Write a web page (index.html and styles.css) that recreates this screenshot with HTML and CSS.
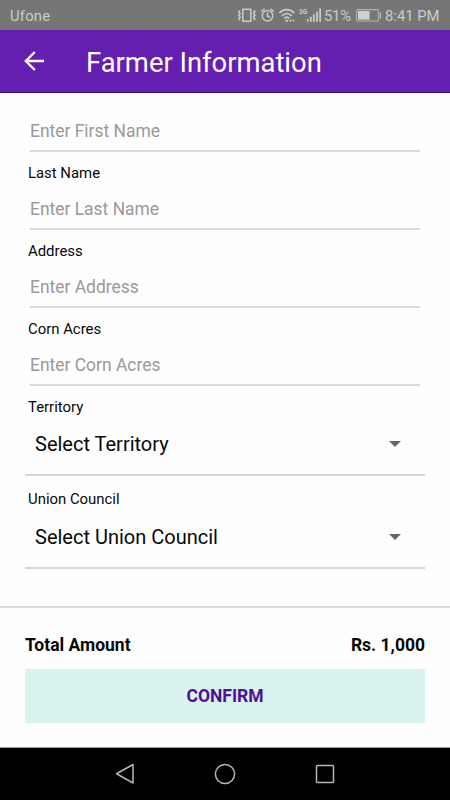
FILE: index.html
```html
<!DOCTYPE html>
<html lang="en">
<head>
<meta charset="utf-8">
<title>Farmer Information</title>
<link rel="stylesheet" href="styles.css">
</head>
<body>
<div class="status">
  <span class="carrier">Ufone</span>
  <svg class="indicators" width="86" height="30" viewBox="0 0 86 30" fill="none" stroke="#cbcbcb" stroke-width="1.5">
    <rect x="5.800" y="9.300" width="8" height="12"/>
    <path d="M2.800 10.500L1.700 12.200l1.500 1.600L1.700 15.400l1.500 1.600L1.700 18.600l1.100 1.700M16.800 10.500l1.100 1.700-1.500 1.600 1.500 1.600-1.500 1.600 1.500 1.600-1.100 1.700" stroke-width="1.500"/>
    <circle cx="30.500" cy="15.800" r="5.300"/>
    <path d="M30.500 12.500v3.500l2.500 1.600M24.300 11.500l3.300-2.800M36.700 11.500l-3.300-2.800"/>
    <path d="M42.300 13c4.300-4.500 10.600-4.500 15 0M44.800 15.900c3-3 7-3 10 0M47.300 18.400c1.500-1.500 3.500-1.500 5 0" stroke-width="1.700"/>
    <circle cx="49.700" cy="20.700" r="1.300" fill="#cbcbcb" stroke="none"/>
    <path d="M52.500 20.500h1.800M55.800 20.500h1.500" stroke-width="1.900"/>
    <path d="M70.700 21.700v-2.500M73.800 21.700v-5M76.900 21.700v-7.500M80 21.700V11.500M83.100 21.700V8.500" stroke-width="1.800"/>
    <text class="network" x="62" y="13.700">3G</text>
  </svg>
  <span class="percent">51%</span>
  <svg class="battery" width="28" height="30" viewBox="0 0 28 30">
    <rect x="1.600" y="9.600" width="21.800" height="11.400" rx="1" fill="none" stroke="#b4b4b4" stroke-width="1.100"/>
    <rect x="3" y="11" width="11.500" height="8.600" fill="#d0d0d0"/>
    <path d="M25.400 12.500v6" stroke="#c4c4c4" stroke-width="1.300"/>
  </svg>
  <span class="clock">8:41 PM</span>
</div>
<header class="header">
  <svg width="20" height="20" viewBox="0 0 20 20" fill="none" stroke="#fff" stroke-width="2.400"><path d="M20 10H2M10.800 1l-9 9 9 9"/></svg>
  <h1>Farmer Information</h1>
</header>
<main class="form">
  <div class="input"><span class="hint">Enter First Name</span></div>
  <div class="label"><span>Last Name</span></div>
  <div class="input"><span class="hint">Enter Last Name</span></div>
  <div class="label"><span>Address</span></div>
  <div class="input"><span class="hint">Enter Address</span></div>
  <div class="label"><span>Corn Acres</span></div>
  <div class="input"><span class="hint">Enter Corn Acres</span></div>
  <div class="label"><span>Territory</span></div>
  <div class="select"><span>Select Territory</span><i class="caret"></i></div>
  <div class="label label-union"><span>Union Council</span></div>
  <div class="select"><span>Select Union Council</span><i class="caret"></i></div>
</main>
<footer class="footer">
  <div class="total"><span>Total Amount</span><span>Rs. 1,000</span></div>
  <div class="confirm"><span>CONFIRM</span></div>
</footer>
<nav class="nav">
  <svg width="22" height="24" viewBox="0 0 22 24"><path d="M19 2.500v18.500L2.500 11.750z"/></svg>
  <svg width="22" height="24" viewBox="0 0 22 24"><circle cx="11" cy="12" r="9.600"/></svg>
  <svg width="22" height="24" viewBox="0 0 22 24"><rect x="2.500" y="3.500" width="17" height="17" rx=".8"/></svg>
</nav>
</body>
</html>
```
FILE: styles.css
```css
* { box-sizing: border-box; }
body {
  margin: 0;
  width: 450px;
  height: 800px;
  display: flex;
  flex-direction: column;
  overflow: hidden;
  background: #fefefe;
  color: #080808;
  font-family: Roboto, sans-serif;
}
.status {
  height: 30px;
  padding: 2px 9px 0 10px;
  display: flex;
  align-items: center;
  background: #767676;
  color: #cbcbcb;
  font-size: 14.8px;
  white-space: nowrap;
}
.status svg { flex: none; margin-top: -2px; }
.carrier { width: 227px; letter-spacing: .2px; }
.percent { width: 31px; margin-left: 1px; letter-spacing: -.2px; }
.battery { margin-right: 2px; }
.network { font-size: 6.500px; font-weight: 700; fill: #cbcbcb; stroke: none; }
.header {
  height: 63px;
  padding-left: 24px;
  display: flex;
  align-items: center;
  gap: 42px;
  background: #651fb0;
  border-bottom: 1px solid #380c6b;
  color: #fff;
}
.header h1 { margin: 3px 0 0; font-size: 27.4px; font-weight: 400; }
.form { height: 513px; padding: 23px 25px 0; }
.input {
  height: 36px;
  margin: 0 5px;
  line-height: 30px;
  border-bottom: 2px solid #dadada;
  color: #999;
  font-size: 17.45px;
}
.label { height: 42px; line-height: 42px; padding-left: 3px; font-size: 14.9px; }
.label-union { height: 45px; line-height: 47px; }
.select {
  height: 48px;
  padding: 0 24px 0 10px;
  display: flex;
  justify-content: space-between;
  line-height: 32px;
  border-bottom: 2px solid #d6d6d6;
  font-size: 20px;
}
.caret {
  width: 12px;
  height: 6px;
  margin-top: 13px;
  background: #686868;
  clip-path: polygon(0 0, 100% 0, 50% 100%);
}
.footer { height: 141px; padding: 22px 25px 0; border-top: 2px solid #dadada; }
.total {
  height: 39px;
  line-height: 31px;
  display: flex;
  justify-content: space-between;
  font-size: 17.5px;
  font-weight: 700;
}
.confirm {
  height: 54px;
  line-height: 55px;
  background: #d9f3ee;
  color: #4c1198;
  text-align: center;
  font-size: 17.5px;
  font-weight: 700;
}
.nav {
  flex: 1;
  display: flex;
  align-items: center;
  justify-content: center;
  gap: 78px;
  background: #000;
  border-top: 1px solid #999;
}
.nav svg { fill: none; stroke: #b5b5b5; stroke-width: 1.5; stroke-linejoin: round; }
```
